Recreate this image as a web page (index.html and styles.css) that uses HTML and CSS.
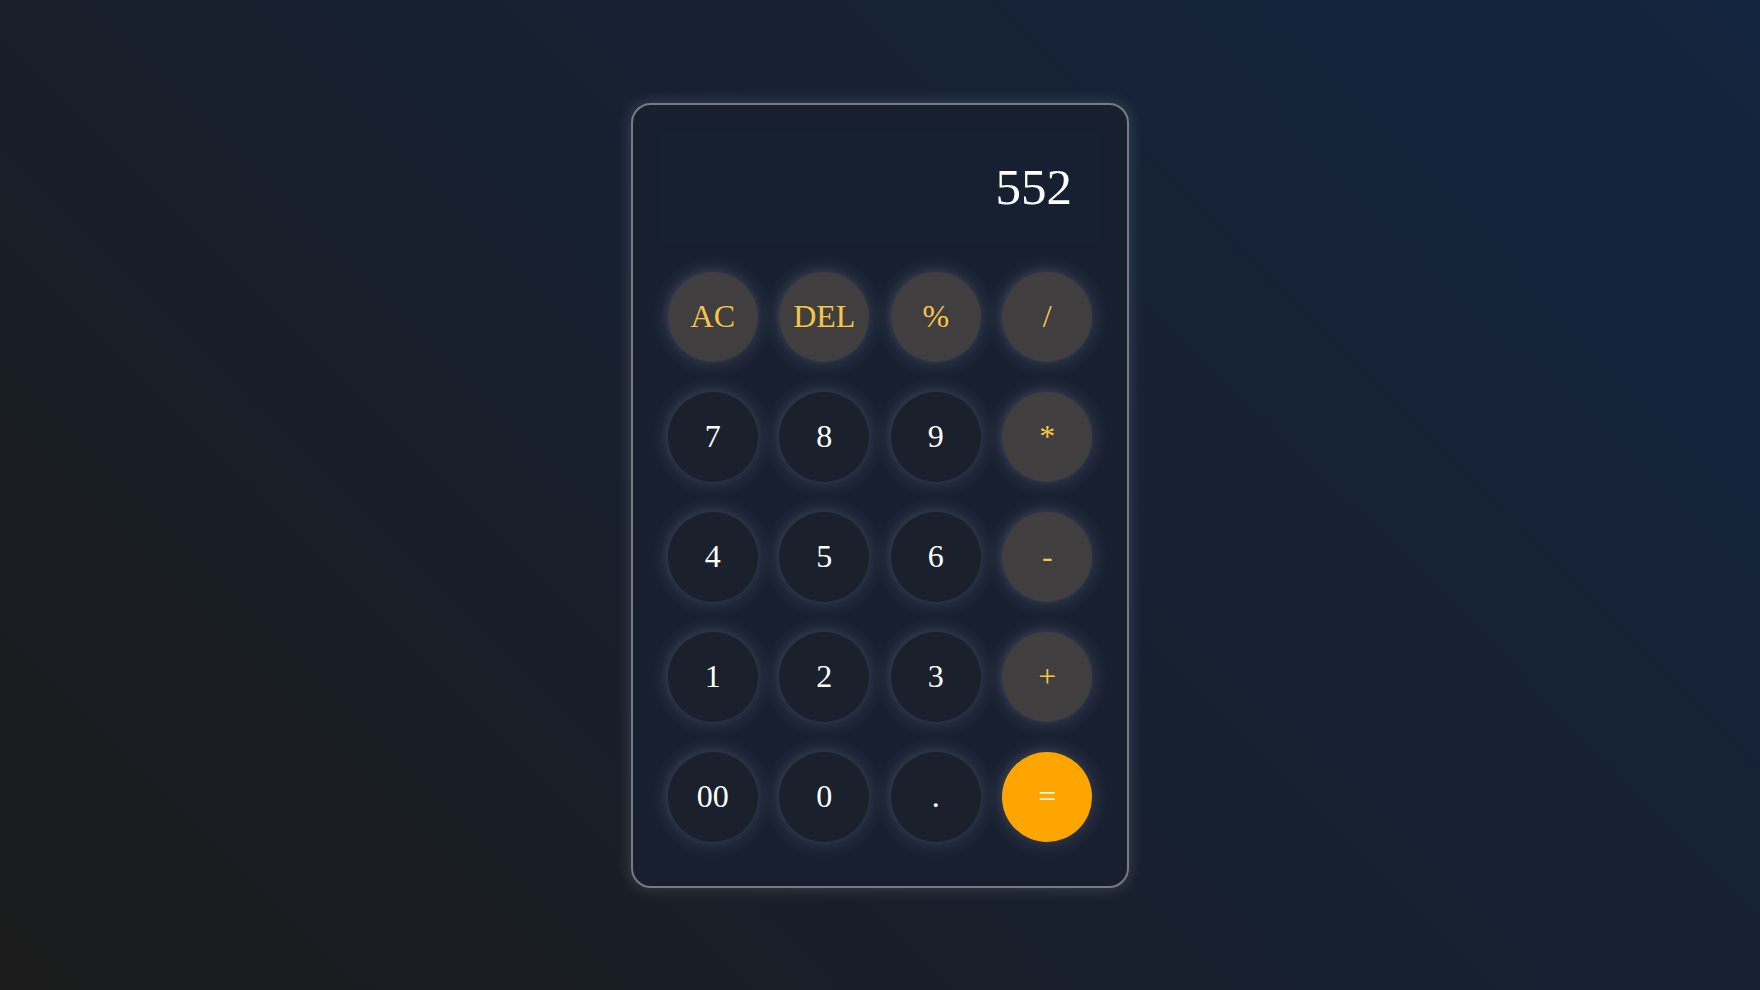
FILE: index.html
```html
<!DOCTYPE html>
<html lang="en">
<head>
<meta charset="utf-8">
<title>Calculator</title>
<link rel="stylesheet" href="styles.css">
</head>
<body>
<div class="calculator">
  <div class="display"><span class="value">552</span></div>
  <div class="keys">
    <button class="key op">AC</button>
    <button class="key op">DEL</button>
    <button class="key op">%</button>
    <button class="key op">/</button>
    <button class="key">7</button>
    <button class="key">8</button>
    <button class="key">9</button>
    <button class="key op">*</button>
    <button class="key">4</button>
    <button class="key">5</button>
    <button class="key">6</button>
    <button class="key op">-</button>
    <button class="key">1</button>
    <button class="key">2</button>
    <button class="key">3</button>
    <button class="key op">+</button>
    <button class="key">00</button>
    <button class="key">0</button>
    <button class="key">.</button>
    <button class="key equals">=</button>
  </div>
</div>
</body>
</html>
```
FILE: styles.css
```css
* { box-sizing: border-box; }
html, body { height: 100%; }
body {
  margin: 0;
  min-height: 100vh;
  display: flex;
  align-items: center;
  justify-content: center;
  background: linear-gradient(45deg, #1b1b1b 0%, #172030 50%, #14253f 100%);
  font-family: "Liberation Serif", "Times New Roman", serif;
}
.calculator {
  width: 498px;
  height: 785px;
  padding: 24px;
  border: 2px solid #777b80;
  border-radius: 20px;
  background: #182030;
  box-shadow: 0 0 16px rgba(210, 220, 240, 0.2);
}
.display {
  height: 118px;
  background: #162031;
  box-shadow: 0 0 4px rgba(0, 0, 0, 0.12);
  display: flex;
  align-items: center;
  justify-content: flex-end;
  padding-right: 31px;
  margin-bottom: 25px;
}
.value {
  color: #ffffff;
  font-size: 51px;
  line-height: 1;
}
.keys {
  display: grid;
  grid-template-columns: repeat(4, 1fr);
  row-gap: 30px;
  justify-items: center;
}
.key {
  width: 90px;
  height: 90px;
  border-radius: 50%;
  border: none;
  padding: 0;
  background: #1a202c;
  color: #ffffff;
  font-family: "Liberation Serif", "Times New Roman", serif;
  font-size: 32px;
  box-shadow: 0 0 20px rgba(200, 215, 240, 0.2), -2px -2px 10px rgba(200, 215, 240, 0.06);
}
.key.op {
  background: #403e3e;
  color: #f7c548;
}
.key.equals {
  background: #ffa500;
  color: #ffffff;
}
```
